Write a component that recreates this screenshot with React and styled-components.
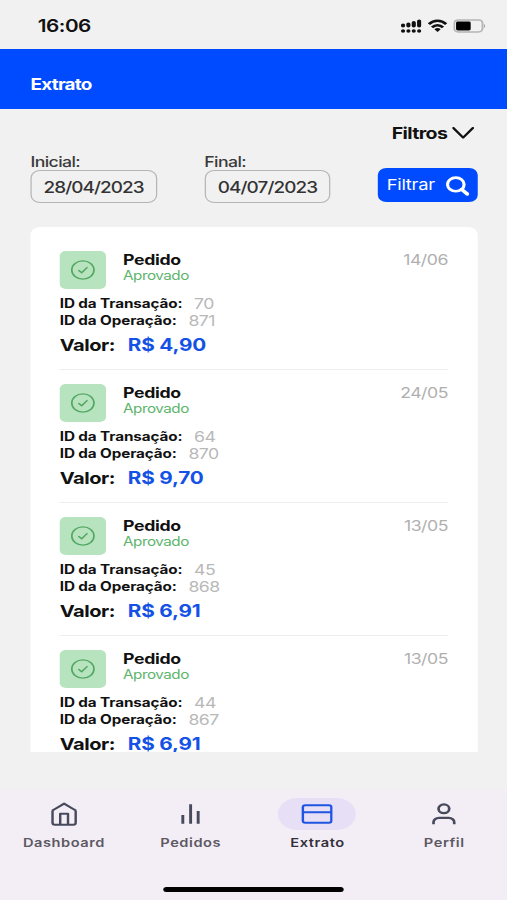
import React from "react";
import styled, { createGlobalStyle } from "styled-components";

const transactions = [
  { date: "14/06", transactionId: 70, operationId: 871, value: "4,90" },
  { date: "24/05", transactionId: 64, operationId: 870, value: "9,70" },
  { date: "13/05", transactionId: 45, operationId: 868, value: "6,91" },
  { date: "13/05", transactionId: 44, operationId: 867, value: "6,91" },
];

const SignalIcon = () => (
  <svg width="17" height="14" viewBox="0 0 17 14" stroke="#111" strokeWidth="3.4" strokeLinecap="round">
    <path d="M1.7 6.1V6.8M6.1 5.1V6.8M10.5 3.7V6.8M14.9 2.1V6.8" />
    <path d="M1.7 12h.01M6.1 12h.01M10.5 12h.01M14.9 12h.01" />
  </svg>
);

const WifiIcon = () => (
  <svg width="16" height="14" viewBox="0 0 16 14" fill="none" stroke="#111" strokeWidth="2.5">
    <path d="M.9 5.1C5 .6 11 .6 15.1 5.1" />
    <path d="M3.5 8.3C6 5.5 10 5.5 12.5 8.3" />
    <path d="M5.4 10.3C7 8.7 9 8.7 10.6 10.3L8 13Z" fill="#111" stroke="none" />
  </svg>
);

const BatteryIcon = () => (
  <svg width="27" height="14" viewBox="0 0 27 14" fill="none">
    <rect x=".7" y=".9" width="23.2" height="12" rx="3.2" stroke="#b4b4b4" strokeWidth="1.5" />
    <rect x="2.2" y="2.5" width="12" height="8.9" rx="1.4" fill="#000" />
    <path d="M25 5v4c1.4-.5 1.4-3.5 0-4Z" fill="#aaa" />
  </svg>
);

const ChevronIcon = () => (
  <svg width="18" height="12" viewBox="0 0 18 12" fill="none" stroke="#111" strokeWidth="2">
    <path d="M1 1 9 10.6 17 1" strokeLinecap="round" strokeLinejoin="round" />
  </svg>
);

const SearchIcon = () => (
  <svg width="19" height="20" viewBox="0 0 19 20" fill="none" stroke="#fff" strokeWidth="2.6">
    <circle cx="8" cy="8.4" r="6.8" />
    <path d="M12.8 13.4 17.4 18" strokeWidth="3.2" strokeLinecap="round" />
  </svg>
);

const CheckIcon = () => (
  <svg width="20" height="20" viewBox="0 0 20 20" fill="none" stroke="#55a863" strokeWidth="1.4">
    <circle cx="10" cy="10" r="9.1" />
    <path d="M6.7 10.4 9 12.8 13.4 7.6" strokeLinecap="round" strokeLinejoin="round" />
  </svg>
);

const HomeIcon = () => (
  <svg width="24" height="24" viewBox="0 0 24 24" fill="none" stroke="#474a5c" strokeWidth="2" strokeLinejoin="round">
    <path d="M3.1 9.4c0-.8.3-1.3 1-1.7l8.5-6.1 8.5 6.1c.7.4 1 .9 1 1.7v11.4c0 1.2-.7 1.9-1.9 1.9H5c-1.2 0-1.9-.7-1.9-1.9Z" />
    <path d="M9.4 22.5V11.8h6.4v10.7" />
  </svg>
);

const ChartIcon = () => (
  <svg width="24" height="24" viewBox="0 0 24 24" fill="none" stroke="#474a5c" strokeWidth="2.4">
    <path d="M6 13v8.7M12.4 2.3v19.4M18.6 9v12.7" />
  </svg>
);

const CardIcon = () => (
  <svg width="26" height="24" viewBox="0 0 26 24" fill="none" stroke="#1f55e0" strokeWidth="2">
    <rect x="1.5" y="3.2" width="23.4" height="17.6" rx="2" />
    <path d="M1.5 10.2h23.4" />
  </svg>
);

const UserIcon = () => (
  <svg width="24" height="24" viewBox="0 0 24 24" fill="none" stroke="#474a5c" strokeWidth="2.2">
    <circle cx="12.2" cy="6.8" r="4.4" />
    <path d="M3.7 22.3v-2a4.500 4.500 0 0 1 4.500-4.500h8a4.500 4.500 0 0 1 4.500 4.500v2" />
  </svg>
);

const tabs = [
  { label: "Dashboard", icon: <HomeIcon /> },
  { label: "Pedidos", icon: <ChartIcon /> },
  { label: "Extrato", icon: <CardIcon />, active: true },
  { label: "Perfil", icon: <UserIcon /> },
];

const App = () => {
  return (
    <>
      <GlobalStyle />
      <Screen>
        <StatusBar>
          <Clock>16:06</Clock>
          <StatusIcons>
            <SignalIcon />
            <WifiIcon />
            <BatteryIcon />
          </StatusIcons>
        </StatusBar>
        <Header>
          <Title>Extrato</Title>
        </Header>
        <Filters>
          <FiltersToggle>
            Filtros
            <ChevronIcon />
          </FiltersToggle>
          <FilterRow>
            <Field>
              <FieldLabel>Inicial:</FieldLabel>
              <DateBox>28/04/2023</DateBox>
            </Field>
            <Field>
              <FieldLabel>Final:</FieldLabel>
              <DateBox>04/07/2023</DateBox>
            </Field>
            <FilterButton>
              <span>Filtrar</span>
              <SearchIcon />
            </FilterButton>
          </FilterRow>
        </Filters>
        <List>
          {transactions.map((item) => (
            <Item key={item.operationId}>
              <ItemHeader>
                <StatusBadge>
                  <CheckIcon />
                </StatusBadge>
                <ItemInfo>
                  <ItemTitle>Pedido</ItemTitle>
                  <ItemStatus>Aprovado</ItemStatus>
                </ItemInfo>
                <ItemDate>{item.date}</ItemDate>
              </ItemHeader>
              <Details>
                <DetailRow>
                  <DetailLabel>ID da Transação:</DetailLabel>
                  <DetailValue>{item.transactionId}</DetailValue>
                </DetailRow>
                <DetailRow>
                  <DetailLabel>ID da Operação:</DetailLabel>
                  <DetailValue>{item.operationId}</DetailValue>
                </DetailRow>
              </Details>
              <ValueRow>
                <ValueLabel>Valor:</ValueLabel>
                <Price>R$ {item.value}</Price>
              </ValueRow>
            </Item>
          ))}
        </List>
        <TabBar>
          <Tabs>
            {tabs.map((tab) => (
              <Tab key={tab.label}>
                <TabIcon $active={tab.active}>{tab.icon}</TabIcon>
                <TabLabel $active={tab.active}>{tab.label}</TabLabel>
              </Tab>
            ))}
          </Tabs>
          <HomeIndicator />
        </TabBar>
      </Screen>
    </>
  );
};

// Styled Components
const GlobalStyle = createGlobalStyle`
  * {
    box-sizing: border-box;
  }

  body {
    margin: 0;
    overflow: hidden;
    background: #f1f1f1;
    font-family: Inter, "Liberation Sans", sans-serif;
  }

  svg {
    display: block;
    flex-shrink: 0;
  }
`;

// 416px wide layout stretched to the full 507px window
const Screen = styled.div`
  display: flex;
  flex-direction: column;
  width: 416px;
  height: 900px;
  background: #f1f1f1;
  color: #111;
  transform: scaleX(1.21875);
  transform-origin: left top;
`;

const StatusBar = styled.div`
  display: flex;
  justify-content: space-between;
  align-items: center;
  height: 49px;
  padding: 3px 17.5px 0 31px;
`;

const Clock = styled.span`
  font-size: 17px;
  font-weight: 600;
  letter-spacing: -0.4px;
`;

const StatusIcons = styled.div`
  display: flex;
  gap: 5px;
`;

const Header = styled.header`
  display: flex;
  align-items: center;
  height: 60px;
  padding: 10px 25px 0;
  background: #004bff;
`;

const Title = styled.h1`
  margin: 0;
  color: #fff;
  font-size: 15.5px;
  font-weight: 700;
  letter-spacing: -0.6px;
`;

const Filters = styled.section`
  height: 118px;
  padding: 14px 24px 0 25px;
`;

const FiltersToggle = styled.div`
  display: flex;
  justify-content: flex-end;
  align-items: center;
  gap: 4px;
  height: 20px;
  padding-right: 3px;
  font-size: 16px;
  font-weight: 700;
  letter-spacing: -0.5px;
`;

const FilterRow = styled.div`
  display: flex;
  align-items: flex-end;
  margin-top: 10px;
`;

const Field = styled.div`
  width: 104px;
  margin-right: 39px;
`;

const FieldLabel = styled.div`
  height: 17px;
  color: #3a3a3a;
  font-size: 14.5px;
  font-weight: 500;
  line-height: 17px;
  letter-spacing: -0.5px;
`;

const DateBox = styled.div`
  display: flex;
  align-items: center;
  justify-content: center;
  height: 33px;
  padding-top: 1px;
  border: 1.4px solid #b5b5b5;
  border-radius: 8px;
  color: #333;
  font-size: 15.5px;
  font-weight: 500;
  letter-spacing: -0.75px;
`;

const FilterButton = styled.button`
  display: flex;
  align-items: center;
  justify-content: space-between;
  width: 82px;
  height: 34px;
  margin: 0 0 1px auto;
  padding: 1px 7px 0 7px;
  border: none;
  border-radius: 7px;
  background: #004bff;
  color: #fff;
  font-family: inherit;
  font-size: 15px;
  font-weight: 400;
  letter-spacing: -0.2px;

  span {
    padding-bottom: 2px;
  }
`;

const List = styled.main`
  height: 525px;
  margin: 0 24px 0 25px;
  padding: 24px 24px 0;
  overflow: hidden;
  border-radius: 8px 8px 0 0;
  background: #fff;
`;

const Item = styled.article`
  height: 119px;
  margin-bottom: 14px;
  border-bottom: 1.5px solid #eee;
`;

const ItemHeader = styled.div`
  display: flex;
  height: 38px;
`;

const StatusBadge = styled.div`
  display: flex;
  align-items: center;
  justify-content: center;
  width: 38px;
  height: 38px;
  border-radius: 5px;
  background: #b7e4bf;
`;

const ItemInfo = styled.div`
  margin-left: 14px;
`;

const ItemTitle = styled.div`
  font-size: 14.5px;
  font-weight: 700;
  line-height: 17px;
  letter-spacing: -0.3px;
`;

const ItemStatus = styled.div`
  color: #5db46b;
  font-size: 12.5px;
  font-weight: 400;
  line-height: 15px;
  letter-spacing: -0.4px;
`;

const ItemDate = styled.div`
  margin-left: auto;
  padding-right: 0.5px;
  color: #b0b0b0;
  font-size: 14.5px;
  line-height: 18px;
  letter-spacing: -0.4px;
`;

const Details = styled.div`
  margin-top: 6px;
`;

const DetailRow = styled.div`
  display: flex;
  align-items: center;
  gap: 9.5px;
  height: 17px;
`;

const DetailLabel = styled.span`
  font-size: 12.5px;
  font-weight: 700;
  line-height: 17px;
  letter-spacing: -0.08px;
`;

const DetailValue = styled.span`
  color: #b8b8b8;
  font-size: 14.5px;
  line-height: 17px;
  letter-spacing: -0.45px;
`;

const ValueRow = styled.div`
  display: flex;
  align-items: center;
  gap: 10.5px;
  height: 20px;
  margin-top: 6px;
  font-size: 17px;
  font-weight: 700;
  line-height: 20px;
`;

const ValueLabel = styled.span`
  font-size: 16.5px;
  letter-spacing: -0.4px;
`;

const Price = styled.span`
  color: #1452e6;
  letter-spacing: -0.15px;
`;

const TabBar = styled.footer`
  height: 115px;
  margin-top: auto;
  padding-top: 13px;
  background: linear-gradient(#f1f1f1, #f3edf5 10px);
`;

const Tabs = styled.nav`
  display: flex;
`;

const Tab = styled.div`
  display: flex;
  flex: 1;
  flex-direction: column;
  align-items: center;
`;

const TabIcon = styled.div`
  display: flex;
  align-items: center;
  justify-content: center;
  width: 64px;
  height: 32px;
  border-radius: 16px;
  background: ${({ $active }) => ($active ? "#e7dff6" : "transparent")};
`;

const TabLabel = styled.span`
  margin-top: 4px;
  padding-left: 1px;
  color: ${({ $active }) => ($active ? "#33303b" : "#5c5963")};
  font-size: 12px;
  font-weight: 600;
  line-height: 17px;
  letter-spacing: 0.45px;
`;

const HomeIndicator = styled.div`
  width: 148px;
  height: 5px;
  margin: 36px auto 0;
  border-radius: 3px;
  background: #000;
`;

export default App;
